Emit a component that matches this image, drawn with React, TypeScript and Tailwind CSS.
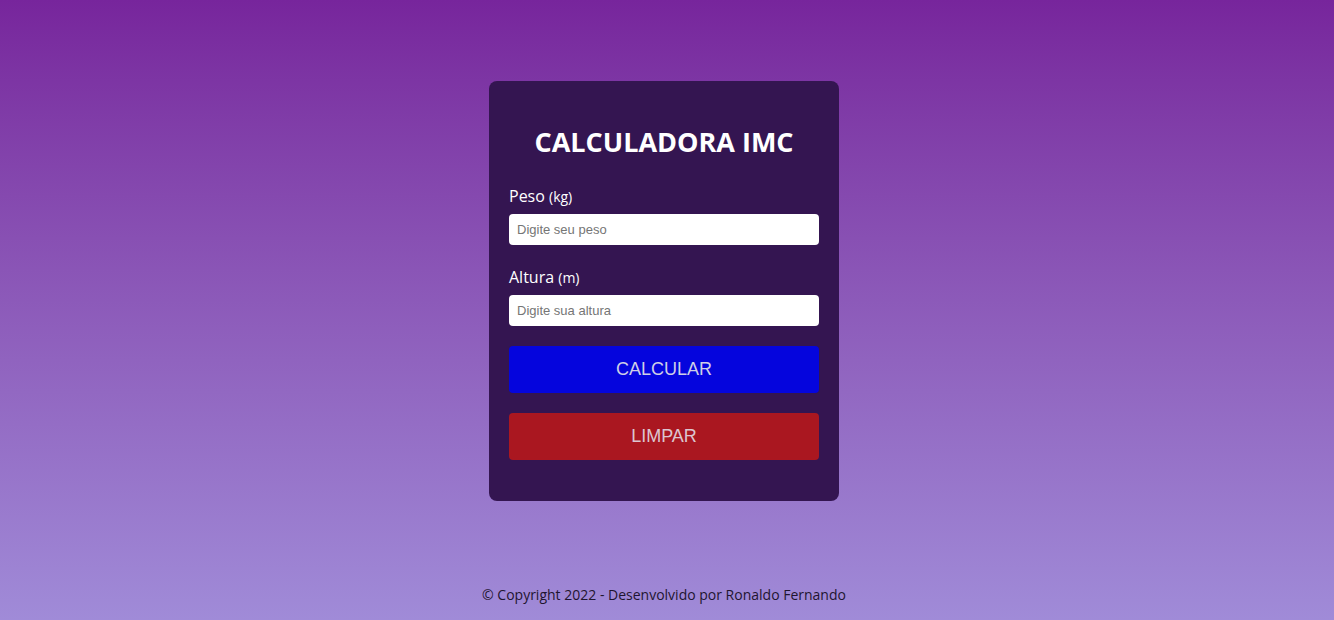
import { useState } from 'react'

const poppins = { fontFamily: '"Open Sans", "DejaVu Sans", sans-serif' }

export default function App() {
  const [peso, setPeso] = useState('')
  const [altura, setAltura] = useState('')

  return (
    <div className="min-h-screen flex flex-col items-center pr-[6px] bg-gradient-to-b from-[#77259c] to-[#a08bd8] font-['Open_Sans',sans-serif]">
      <main className="mt-[81px] w-[350px] rounded-lg bg-[#341551] px-5 pt-10 pb-[41px]">
        <h1 className="text-center text-[27px] leading-[42px] font-bold text-white mb-[21px]">CALCULADORA IMC</h1>

        <div className="mb-5">
          <label className="block text-white text-[16px] leading-6 font-medium mb-[5px]">
            Peso <span className="text-[14px]">(kg)</span>
          </label>
          <input
            value={peso}
            onChange={e => setPeso(e.target.value)}
            placeholder="Digite seu peso"
            className="w-full h-[31px] rounded bg-white px-2 text-[13px] font-['Liberation_Sans',Arial,sans-serif] text-gray-800 placeholder:text-[#757575] outline-none"
          />
        </div>

        <div className="mb-5">
          <label className="block text-white text-[16px] leading-6 font-medium mb-[5px]">
            Altura <span className="text-[14px]">(m)</span>
          </label>
          <input
            value={altura}
            onChange={e => setAltura(e.target.value)}
            placeholder="Digite sua altura"
            className="w-full h-[31px] rounded bg-white px-2 text-[13px] font-['Liberation_Sans',Arial,sans-serif] text-gray-800 placeholder:text-[#757575] outline-none"
          />
        </div>

        <button className="w-full h-[47px] rounded bg-[#0505dd] text-[#cfcfe6] text-[18px] font-['Liberation_Sans',Arial,sans-serif] mb-5">
          CALCULAR
        </button>
        <button
          onClick={() => { setPeso(''); setAltura('') }}
          className="w-full h-[47px] rounded bg-[#aa1720] text-[#dcc6d0] text-[18px] font-['Liberation_Sans',Arial,sans-serif]"
        >
          LIMPAR
        </button>
      </main>

      <div className="flex-1" />

      <footer style={poppins} className="pb-[15px] text-[14px] leading-5 text-[#1f1530]">
        © Copyright 2022 - Desenvolvido por Ronaldo Fernando
      </footer>
    </div>
  )
}
